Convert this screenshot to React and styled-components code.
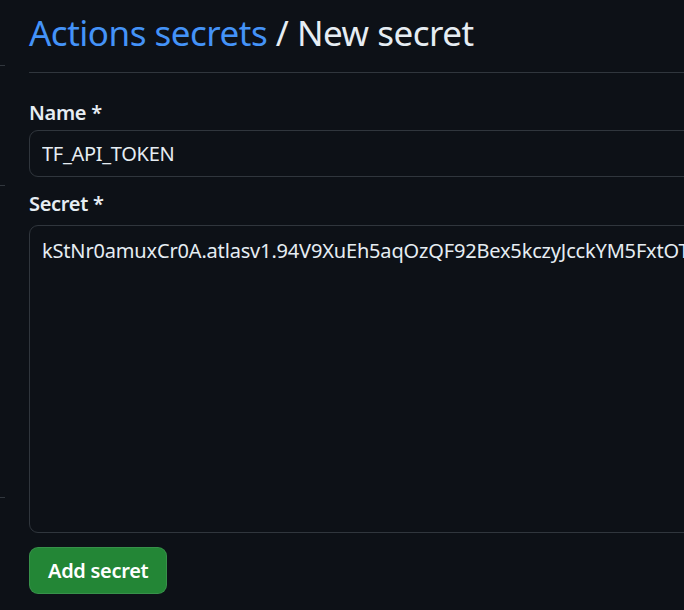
import React from "react";
import styled, { createGlobalStyle } from "styled-components";

const Global = createGlobalStyle`
  html, body { margin: 0; padding: 0; background: #0d1117; }
  body { overflow: hidden; font-family: "Noto Sans", "Open Sans", sans-serif; color: #e6edf3; }
`;

const Page = styled.div`
  display: flex;
  gap: 24px;
  width: 1200px;
  height: 610px;
  background: #0d1117;
`;

const Sidebar = styled.nav`
  width: 5px;
  flex: none;
  display: flex;
  flex-direction: column;
`;

const SideDivider = styled.div`
  height: 1px;
  background: #30363d;
  margin-top: ${(p) => p.$gap}px;
`;

const Main = styled.main`
  flex: 1;
  display: flex;
  flex-direction: column;
  padding-top: 6px;
`;

const Subhead = styled.div`
  border-bottom: 1px solid #30363d;
  padding-bottom: 12px;
`;

const Heading = styled.h2`
  margin: 0;
  font-size: 35px;
  font-weight: 400;
  letter-spacing: -0.5px;
  line-height: 54px;
  color: #e6edf3;
`;

const Crumb = styled.a`
  color: #4493f8;
  text-decoration: none;
`;

const Form = styled.form`
  display: flex;
  flex-direction: column;
  padding-top: 23px;
`;

const Field = styled.div`
  display: flex;
  flex-direction: column;
  margin-bottom: ${(p) => p.$mb}px;
`;

const Label = styled.label`
  font-size: 20px;
  font-weight: 600;
  letter-spacing: -0.3px;
  line-height: 34px;
  margin-bottom: ${(p) => p.$mb}px;
  color: #e6edf3;
`;

const Input = styled.input`
  box-sizing: border-box;
  height: 47px;
  padding: 0 12px;
  font-family: inherit;
  font-size: 20px;
  letter-spacing: -0.3px;
  color: #e6edf3;
  background: #0d1117;
  border: 1px solid #30363d;
  border-radius: 9px;
  outline: none;
`;

const TextArea = styled.textarea`
  box-sizing: border-box;
  height: 308px;
  padding: 10px 12px;
  font-family: inherit;
  font-size: 20px;
  letter-spacing: -0.17px;
  line-height: 30px;
  color: #e6edf3;
  background: #0d1117;
  border: 1px solid #30363d;
  border-radius: 9px;
  outline: none;
  resize: none;
  overflow: hidden;
  white-space: pre;
`;

const Actions = styled.div`
  display: flex;
`;

const Button = styled.button`
  box-sizing: border-box;
  height: 47px;
  padding: 0 18px;
  font-family: inherit;
  font-size: 20px;
  font-weight: 600;
  letter-spacing: -0.3px;
  color: #ffffff;
  background: #238636;
  border: 1px solid rgba(240, 246, 252, 0.1);
  border-radius: 9px;
  cursor: pointer;
`;

const SECRET =
  "kStNr0amuxCr0A.atlasv1.94V9XuEh5aqOzQF92Bex5kczyJcckYM5FxtOT";

export default function App() {
  return (
    <>
      <Global />
      <Page>
        <Sidebar>
          <SideDivider $gap={65} />
          <SideDivider $gap={119} />
          <SideDivider $gap={311} />
        </Sidebar>
        <Main>
          <Subhead>
            <Heading>
              <Crumb href="#">Actions secrets</Crumb> / New secret
            </Heading>
          </Subhead>
          <Form onSubmit={(e) => e.preventDefault()}>
            <Field $mb={10}>
              <Label htmlFor="name" $mb={0}>Name *</Label>
              <Input id="name" readOnly value="TF_API_TOKEN" />
            </Field>
            <Field $mb={14}>
              <Label htmlFor="secret" $mb={4}>Secret *</Label>
              <TextArea id="secret" readOnly wrap="off" value={SECRET} />
            </Field>
            <Actions>
              <Button type="submit">Add secret</Button>
            </Actions>
          </Form>
        </Main>
      </Page>
    </>
  );
}
